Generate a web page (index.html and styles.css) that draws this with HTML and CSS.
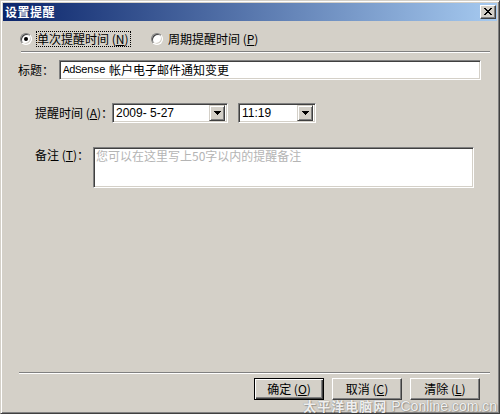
FILE: index.html
```html
<!DOCTYPE html>
<html lang="zh-CN">
<head>
<meta charset="utf-8">
<title>设置提醒</title>
<link rel="stylesheet" href="styles.css">
</head>
<body>
<div class="window">
  <div class="titlebar">
    <span class="title">设置提醒</span>
    <span class="close-btn">
      <svg width="8" height="7" viewBox="0 0 8 7" shape-rendering="crispEdges"><path d="M0 0h2v1H0zM6 0h2v1H6zM1 1h2v1H1zM5 1h2v1H5zM2 2h4v1H2zM3 3h2v1H3zM2 4h4v1H2zM1 5h2v1H1zM5 5h2v1H5zM0 6h2v1H0zM6 6h2v1H6z" fill="#000"/></svg>
    </span>
  </div>
  <div class="content">
    <div class="radio-row">
      <div class="radio radio-first">
        <span class="radio-circle checked"></span>
        <span class="radio-label focused">单次提醒时间 (<u>N</u>)</span>
      </div>
      <div class="radio">
        <span class="radio-circle"></span>
        <span class="radio-label">周期提醒时间 (<u>P</u>)</span>
      </div>
    </div>
    <div class="sep sep-top"></div>

    <div class="row row-title">
      <span class="label label-title">标题：</span>
      <div class="field field-title"><span class="mono">AdSense</span><span class="cn-text">帐户电子邮件通知变更</span></div>
    </div>

    <div class="row row-time">
      <span class="label label-time">提醒时间 (<u>A</u>)：</span>
      <div class="field combo combo-date">
        <span class="combo-text">2009- 5-27</span>
        <span class="combo-btn"><svg width="7" height="4" viewBox="0 0 7 4" shape-rendering="crispEdges"><path d="M0 0h7v1H0zM1 1h5v1H1zM2 2h3v1H2zM3 3h1v1H3z" fill="#000"/></svg></span>
      </div>
      <div class="field combo combo-time">
        <span class="combo-text">11:19</span>
        <span class="combo-btn"><svg width="7" height="4" viewBox="0 0 7 4" shape-rendering="crispEdges"><path d="M0 0h7v1H0zM1 1h5v1H1zM2 2h3v1H2zM3 3h1v1H3z" fill="#000"/></svg></span>
      </div>
    </div>

    <div class="row row-remarks">
      <span class="label label-remarks">备注 (<u>T</u>)：</span>
      <div class="field field-remarks"><span class="placeholder">您可以在这里写上50字以内的提醒备注</span></div>
    </div>

    <div class="spacer"></div>
    <div class="sep sep-bottom"></div>

    <div class="button-row">
      <div class="btn btn-default">确定 (<u>O</u>)</div>
      <div class="btn">取消 (<u>C</u>)</div>
      <div class="btn">清除 (<u>L</u>)</div>
    </div>
  </div>
  <div class="watermark"><span class="wm-cn">太平洋电脑网</span> <span class="wm-en">PConline.com.cn</span></div>
</div>
</body>
</html>
```

FILE: styles.css
```css
html, body {
  margin: 0;
  padding: 0;
}

body {
  width: 500px;
  height: 414px;
  overflow: hidden;
  background: #d4d0c8;
  font-family: "Noto Sans CJK SC", "Noto Sans", sans-serif;
  font-size: 12px;
  color: #000;
}

u {
  text-decoration: underline;
  text-underline-offset: 1px;
}

.window {
  position: relative;
  width: 500px;
  height: 414px;
  box-sizing: border-box;
  background: #d4d0c8;
  border: 1px solid;
  border-color: #d4d0c8 #404040 #404040 #d4d0c8;
  box-shadow: inset 1px 1px #fff, inset -1px -1px #808080;
  padding: 2px;
  display: flex;
  flex-direction: column;
}

.titlebar {
  height: 18px;
  flex: none;
  display: flex;
  align-items: center;
  justify-content: space-between;
  background: linear-gradient(to right, #0a246a, #a6caf0);
  padding: 0 1px 0 2px;
}

.title {
  color: #fff;
  font-weight: bold;
  font-size: 12px;
  line-height: 18px;
  letter-spacing: 0.5px;
}

.close-btn {
  width: 16px;
  height: 14px;
  box-sizing: border-box;
  background: #d4d0c8;
  border: 1px solid;
  border-color: #fff #404040 #404040 #fff;
  box-shadow: inset -1px -1px #808080;
  display: flex;
  align-items: center;
  justify-content: center;
  padding: 0 1px 1px 0;
}

.close-btn svg {
  display: block;
}

.content {
  flex: 1;
  display: flex;
  flex-direction: column;
}

/* radios */
.radio-row {
  margin-top: 10px;
  height: 16px;
  display: flex;
  align-items: center;
  padding-left: 17px;
}

.radio {
  display: flex;
  align-items: center;
}

.radio-first {
  width: 131px;
}

.radio-circle {
  position: relative;
  width: 12px;
  height: 12px;
  box-sizing: border-box;
  border-radius: 50%;
  border: 1px solid;
  border-color: #808080 #fff #fff #808080;
  background: #fff;
  box-shadow: inset 1px 1px #404040, inset -1px -1px #d4d0c8;
  margin-right: 4px;
  flex: none;
}

.radio-circle.checked::after {
  content: "";
  position: absolute;
  left: 3px;
  top: 3px;
  width: 4px;
  height: 4px;
  border-radius: 50%;
  background: #000;
}

.radio-label {
  line-height: 14px;
  border: 1px dotted transparent;
  padding: 0 1px 0 0;
  white-space: nowrap;
}

.radio-label.focused {
  border-color: #000;
}

/* separators */
.sep {
  height: 0;
  border-top: 1px solid #808080;
  border-bottom: 1px solid #fff;
  flex: none;
}

.sep-top {
  margin: 4px 0 0 18px;
  width: 469px;
}

.sep-bottom {
  margin: 0 0 0 16px;
  width: 471px;
}

/* rows */
.row {
  display: flex;
  flex: none;
}

.label {
  line-height: 16px;
  white-space: nowrap;
  flex: none;
}

.field {
  box-sizing: border-box;
  background: #fff;
  border: 1px solid;
  border-color: #808080 #fff #fff #808080;
  box-shadow: inset 1px 1px #404040, inset -1px -1px #d4d0c8;
}

.row-title {
  margin-top: 7px;
  height: 20px;
  align-items: center;
  padding-left: 15px;
}

.label-title {
  width: 41px;
}

.field-title {
  width: 422px;
  height: 20px;
  padding-left: 3px;
  display: flex;
  align-items: center;
  line-height: 18px;
  white-space: nowrap;
}

.mono {
  font-family: "Liberation Mono", "DejaVu Sans Mono", monospace;
  font-size: 11px;
  letter-spacing: -0.6px;
}

.cn-text {
  margin-left: 4px;
}

.row-time {
  margin-top: 23px;
  height: 20px;
  align-items: center;
  padding-left: 32px;
}

.label-time {
  width: 77px;
}

.combo {
  height: 20px;
  display: flex;
  align-items: center;
  justify-content: space-between;
  padding: 2px 2px 2px 2px;
}

.combo-date {
  width: 116px;
}

.combo-time {
  width: 78px;
  margin-left: 10px;
}

.combo-text {
  font-family: "Liberation Sans", Arial, sans-serif;
  font-size: 12px;
  line-height: 16px;
  padding-left: 1px;
  white-space: nowrap;
}

.combo-btn {
  width: 16px;
  height: 16px;
  box-sizing: border-box;
  background: #d4d0c8;
  border: 1px solid;
  border-color: #d4d0c8 #404040 #404040 #d4d0c8;
  box-shadow: inset 1px 1px #fff, inset -1px -1px #808080;
  display: flex;
  align-items: center;
  justify-content: center;
  flex: none;
}

.combo-btn svg {
  display: block;
}

.row-remarks {
  margin-top: 24px;
  align-items: flex-start;
  padding-left: 32px;
}

.label-remarks {
  width: 58px;
}

.field-remarks {
  width: 381px;
  height: 41px;
  padding: 1px 2px;
  line-height: 14px;
}

.placeholder {
  color: #b4b4b4;
}

.spacer {
  flex: 1;
}

/* buttons */
.button-row {
  flex: none;
  display: flex;
  gap: 8px;
  margin: 4px 0 11px 0;
  padding-left: 251px;
  height: 22px;
}

.btn {
  width: 70px;
  height: 22px;
  box-sizing: border-box;
  background: #d4d0c8;
  border: 1px solid;
  border-color: #fff #404040 #404040 #fff;
  box-shadow: inset -1px -1px #808080;
  display: flex;
  align-items: center;
  justify-content: center;
  line-height: 14px;
  white-space: nowrap;
}

.btn-default {
  border-color: #000;
  box-shadow: inset 1px 1px #fff, inset -1px -1px #404040, inset -2px -2px #808080;
}

/* watermark overlay */
.watermark {
  position: absolute;
  right: 2px;
  bottom: 0;
  height: 14px;
  display: flex;
  align-items: center;
  gap: 4px;
  color: rgba(255, 255, 255, 0.9);
  text-shadow: 0 0 1px rgba(90, 90, 90, 0.7), 1px 1px 1px rgba(0, 0, 0, 0.25);
  white-space: nowrap;
  line-height: 14px;
  pointer-events: none;
}

.wm-cn {
  font-family: "Noto Sans CJK SC", sans-serif;
  font-size: 13px;
  font-weight: bold;
  letter-spacing: 1px;
}

.wm-en {
  font-family: "Liberation Sans", Arial, sans-serif;
  font-size: 14px;
}
```
